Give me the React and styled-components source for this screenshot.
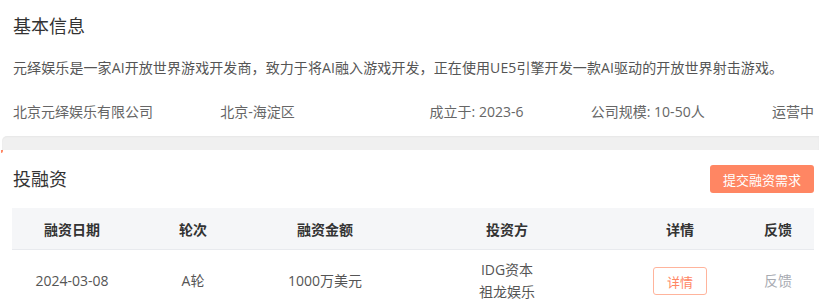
import styled, { createGlobalStyle } from "styled-components";

const GlobalStyle = createGlobalStyle`
body{
margin:0;
background:#fff;
font-family:"Open Sans","Noto Sans CJK SC",sans-serif;
}
`;

const Page = styled.div`
width:819px;
display:flex;
flex-direction:column;
& > *{
flex-shrink:0;
}
`;

const Section = styled.section`
position:relative;
padding:${(p) => p.$pad};
background:#fff;
`;

const Corner = styled.span`
position:absolute;
left:1px;
top:0;
width:2px;
height:3px;
background:#ff8663;
border-radius:0 0 2px 0;
`;

const Title = styled.h2`
margin:0;
font-size:18px;
font-weight:normal;
line-height:26px;
color:#333;
`;

const Desc = styled.p`
margin:18px 0 0;
font-size:14px;
line-height:22px;
color:#555;
white-space:nowrap;
letter-spacing:0.1px;
`;

const InfoRow = styled.div`
display:flex;
justify-content:space-between;
margin-top:22px;
font-size:14px;
line-height:22px;
color:#666;
height:35px;
`;

const Divider = styled.div`
height:14px;
margin-left:2px;
background:#f0f0f0;
border-radius:5px 0 0 0;
box-shadow:inset 0 1px 2px rgba(0,0,0,0.04);
`;

const HeadRow = styled.div`
display:flex;
justify-content:space-between;
align-items:center;
height:28px;
`;

const SubmitBtn = styled.button`
height:28px;
width:104px;
border:none;
border-radius:3px;
background:#ff8663;
color:#fff;
font-family:inherit;
font-size:13px;
cursor:pointer;
`;

const Table = styled.div`
margin-top:15px;
margin-left:-1px;
display:grid;
grid-template-columns:120px 122px 142px 222px 124px 72px;
`;

const HeadCell = styled.div`
height:41px;
display:flex;
align-items:center;
justify-content:center;
background:#f5f6f8;
border-bottom:1px solid #e8eaee;
font-size:14px;
font-weight:bold;
color:#333;
`;

const Cell = styled.div`
height:62px;
display:flex;
flex-direction:column;
align-items:center;
justify-content:center;
font-size:14px;
line-height:22px;
color:${(p) => p.$muted ? "#a8abb2" : "#555"};
`;

const DetailBtn = styled.button`
width:54px;
height:28px;
border:1px solid #ffb49c;
border-radius:3px;
background:#fff;
color:#ff8663;
font-family:inherit;
font-size:13px;
cursor:pointer;
`;

const info = ["北京元绎娱乐有限公司", "北京-海淀区", "", "成立于: 2023-6", "公司规模: 10-50人", "运营中"];
const heads = ["融资日期", "轮次", "融资金额", "投资方", "详情", "反馈"];

export default function App() {
  return (
    <Page>
      <GlobalStyle />
      <Section $pad="13px 5px 0 13px">
        <Title>基本信息</Title>
        <Desc>元绎娱乐是一家AI开放世界游戏开发商，致力于将AI融入游戏开发，正在使用UE5引擎开发一款AI驱动的开放世界射击游戏。</Desc>
        <InfoRow>
          {info.map((t, i) => <span key={i}>{t}</span>)}
        </InfoRow>
      </Section>
      <Divider />
      <Section $pad="15px 5px 0 13px">
        <Corner />
        <HeadRow>
          <Title>投融资</Title>
          <SubmitBtn>提交融资需求</SubmitBtn>
        </HeadRow>
        <Table>
          {heads.map((h) => <HeadCell key={h}>{h}</HeadCell>)}
          <Cell>2024-03-08</Cell>
          <Cell>A轮</Cell>
          <Cell>1000万美元</Cell>
          <Cell><span>IDG资本</span><span>祖龙娱乐</span></Cell>
          <Cell><DetailBtn>详情</DetailBtn></Cell>
          <Cell $muted>反馈</Cell>
        </Table>
      </Section>
    </Page>
  );
}
